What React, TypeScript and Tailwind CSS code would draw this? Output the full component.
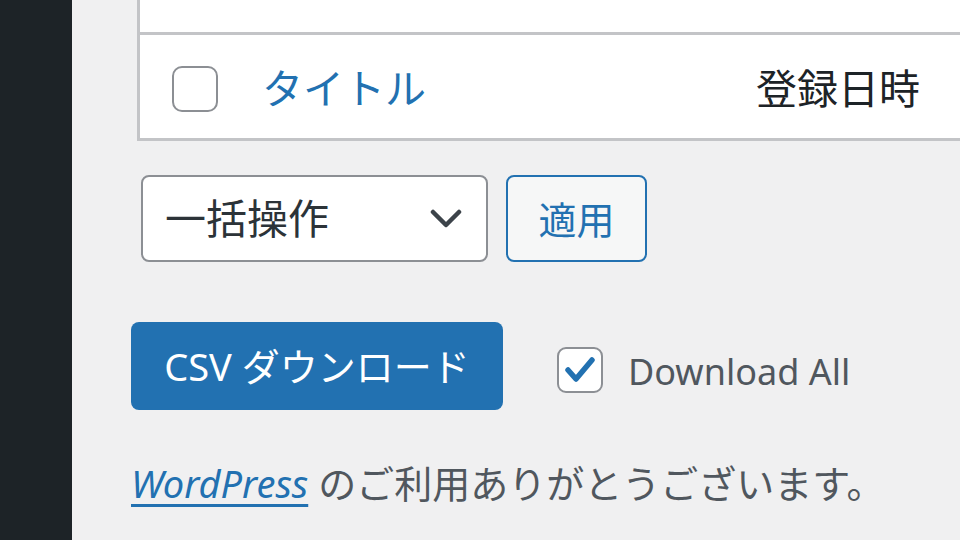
export default function App() {
  return (
    <div
      className="flex h-[540px] w-[960px] overflow-hidden bg-[#f0f0f1] text-[#3c434a]"
      style={{ fontFamily: '"Noto Sans", "Noto Sans CJK JP", sans-serif' }}
    >
      {/* Admin sidebar */}
      <div className="w-[72px] shrink-0 bg-[#1d2327]" />

      <div className="flex shrink-0 flex-col pl-[59px]">
        {/* List table */}
        <div className="ml-[6px] w-[900px] border-x-[3px] border-b-[3px] border-[#c3c4c7] bg-white">
          <div className="h-[35px] border-b-[3px] border-[#c3c4c7]" />
          <div className="flex h-[103px] items-center pt-[4px]">
            <span className="ml-[32px] h-[46px] w-[46px] rounded-[10px] border-[2.5px] border-[#8c8f94] bg-white" />
            <span className="ml-[44px] text-[41px] leading-none text-[#2271b1]">タイトル</span>
            <span className="ml-[330px] text-[41px] leading-none text-[#1d2327]">登録日時</span>
          </div>
        </div>

        {/* Bulk actions */}
        <div className="ml-[10px] mt-[34px] flex gap-[18px]">
          <div className="flex h-[87px] w-[347px] items-center justify-between rounded-[8px] border-[2.5px] border-[#8c8f94] bg-white pl-[22px] pr-[24px]">
            <span className="text-[41px] leading-none text-[#2c3338]">一括操作</span>
            <svg width="32" height="20" viewBox="0 0 32 20" fill="none">
              <path d="M3 3l13 13L29 3" stroke="#3c434a" strokeWidth="4.5" strokeLinecap="round" strokeLinejoin="round" />
            </svg>
          </div>
          <button className="flex h-[87px] w-[141px] items-center justify-center rounded-[8px] border-[2.5px] border-[#2271b1] bg-[#f6f7f7] text-[38px] leading-none text-[#2271b1]">
            適用
          </button>
        </div>

        {/* CSV export */}
        <div className="mt-[60px] flex items-center">
          <button className="flex h-[88px] w-[372px] items-center justify-center rounded-[8px] bg-[#2271b1] text-[38px] leading-none text-white">
            CSV ダウンロード
          </button>
          <label className="ml-[54px] mt-[8px] flex items-center">
            <span className="flex h-[46px] w-[46px] items-center justify-center rounded-[9px] border-[2.5px] border-[#8c8f94] bg-white">
              <svg width="32" height="28" viewBox="0 0 32 28" fill="none">
                <path d="M4 14l8 9L28 4" stroke="#2271b1" strokeWidth="5.5" strokeLinecap="round" strokeLinejoin="round" />
              </svg>
            </span>
            <span className="ml-[25px] mt-[4px] text-[36px] leading-none text-[#50575e]">Download All</span>
          </label>
        </div>

        {/* Footer */}
        <p className="mt-[54px] whitespace-nowrap text-[38px] leading-none text-[#50575e]">
          <a className="italic text-[#2271b1] underline decoration-[3px] underline-offset-[6px]">WordPress</a>
          <span className="ml-[10px]">のご利用ありがとうございます。</span>
        </p>
      </div>
    </div>
  );
}
